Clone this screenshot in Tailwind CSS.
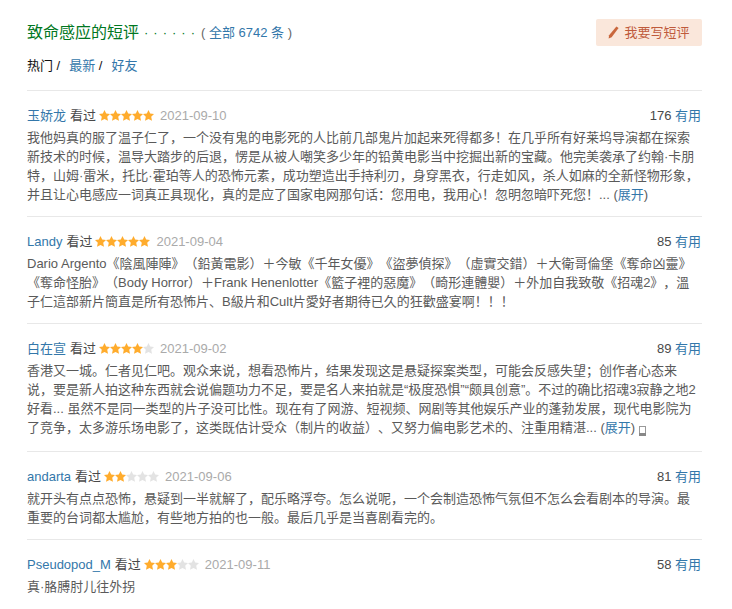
<!DOCTYPE html>
<html lang="zh-CN">
<head>
<meta charset="utf-8">
<script src="https://cdn.jsdelivr.net/npm/@tailwindcss/browser@4"></script>
</head>
<body class="bg-white">
<svg width="0" height="0" class="absolute">
  <defs>
    <path id="s" d="M5.5 0 7.2 3.6 11 4.1 8.2 6.8 9 10.8 5.5 8.9 2 10.8 2.8 6.8 0 4.1 3.8 3.6Z"/>
  </defs>
</svg>
<main class="w-[732px] h-[609px] overflow-hidden pl-[27px] pr-[30px] font-['Liberation_Sans','Noto_Sans_CJK_SC',sans-serif] text-[13px] leading-[19px] text-[#494949] [text-spacing-trim:space-all]">
  <header class="flex justify-between h-[47px] pt-[19px]">
    <h2 class="flex items-center h-[26px] text-[16px] text-[#007722] whitespace-nowrap">致命感应的短评<span class="ml-[5px] tracking-[5px] text-[13px] text-[#007722]">······</span><span class="ml-[1px] text-[13px] text-[#666]">( <a class="text-[#37a]">全部 6742 条</a> )</span></h2>
    <a class="flex items-center justify-center gap-[5px] w-[106px] h-[27px] rounded-[2px] bg-[#fae7db] text-[#bf5a3b]">
      <svg width="11" height="13" viewBox="0 0 11 13"><path d="M8.4.5 10.6 2.1 3.6 11.2.6 12.6 1.1 9.3Z" fill="#c9673d"/></svg>
      <span>我要写短评</span>
    </a>
  </header>
  <nav class="flex h-[43px] pt-[9px] text-[#111] whitespace-nowrap">热门 /<a class="ml-[9px] text-[#37a]">最新</a>&nbsp;/<a class="ml-[9px] text-[#37a]">好友</a></nav>

  <section class="border-t border-[#e8e8e8] h-[126px] pt-[15px] whitespace-nowrap">
    <div class="flex items-center justify-between h-[19px]">
      <div class="flex items-center"><a class="text-[#37a]">玉娇龙</a><span class="ml-[4px]">看过</span>
        <span class="ml-[3px] flex w-[55px] fill-[#ffac2d]"><svg width="11" height="11"><use href="#s"/></svg><svg width="11" height="11"><use href="#s"/></svg><svg width="11" height="11"><use href="#s"/></svg><svg width="11" height="11"><use href="#s"/></svg><svg width="11" height="11"><use href="#s"/></svg></span>
        <span class="ml-[6px] text-[#aaa]">2021-09-10</span></div>
      <div class="mr-[1px]">176 <a class="text-[#37a]">有用</a></div>
    </div>
    <p class="mt-[3px] text-[#5a5a5a]">我他妈真的服了温子仁了，一个没有鬼的电影死的人比前几部鬼片加起来死得都多！在几乎所有好莱坞导演都在探索<br>新技术的时候，温导大踏步的后退，愣是从被人嘲笑多少年的铅黄电影当中挖掘出新的宝藏。他完美袭承了约翰·卡朋<br>特，山姆·雷米，托比·霍珀等人的恐怖元素，成功塑造出手持利刃，身穿黑衣，行走如风，杀人如麻的全新怪物形象，<br>并且让心电感应一词真正具现化，真的是应了国家电网那句话：您用电，我用心！忽明忽暗吓死您！... (<a class="text-[#37a]">展开</a>)</p>
  </section>

  <section class="border-t border-[#e8e8e8] h-[107px] pt-[15px] whitespace-nowrap">
    <div class="flex items-center justify-between h-[19px]">
      <div class="flex items-center"><a class="text-[#37a]">Landy</a><span class="ml-[4px]">看过</span>
        <span class="ml-[3px] flex w-[55px] fill-[#ffac2d]"><svg width="11" height="11"><use href="#s"/></svg><svg width="11" height="11"><use href="#s"/></svg><svg width="11" height="11"><use href="#s"/></svg><svg width="11" height="11"><use href="#s"/></svg><svg width="11" height="11"><use href="#s"/></svg></span>
        <span class="ml-[6px] text-[#aaa]">2021-09-04</span></div>
      <div class="mr-[1px]">85 <a class="text-[#37a]">有用</a></div>
    </div>
    <p class="mt-[3px] text-[#5a5a5a]">Dario Argento《陰風陣陣》（鉛黃電影）＋今敏《千年女優》《盜夢偵探》（虛實交錯）＋大衛哥倫堡《奪命凶靈》<br>《奪命怪胎》（Body Horror）＋Frank Henenlotter《籃子裡的惡魔》（畸形連體嬰）＋外加自我致敬《招魂2》，溫<br>子仁這部新片簡直是所有恐怖片、B級片和Cult片愛好者期待已久的狂歡盛宴啊！！！</p>
  </section>

  <section class="border-t border-[#e8e8e8] h-[128px] pt-[15px] whitespace-nowrap">
    <div class="flex items-center justify-between h-[19px]">
      <div class="flex items-center"><a class="text-[#37a]">白在宣</a><span class="ml-[4px]">看过</span>
        <span class="ml-[3px] flex w-[55px] fill-[#ffac2d]"><svg width="11" height="11"><use href="#s"/></svg><svg width="11" height="11"><use href="#s"/></svg><svg width="11" height="11"><use href="#s"/></svg><svg width="11" height="11"><use href="#s"/></svg><svg width="11" height="11" class="fill-[#e3e3e3]"><use href="#s"/></svg></span>
        <span class="ml-[6px] text-[#aaa]">2021-09-02</span></div>
      <div class="mr-[1px]">89 <a class="text-[#37a]">有用</a></div>
    </div>
    <p class="mt-[3px] text-[#5a5a5a]">香港又一城。仁者见仁吧。观众来说，想看恐怖片，结果发现这是悬疑探案类型，可能会反感失望；创作者心态来<br>说，要是新人拍这种东西就会说偏题功力不足，要是名人来拍就是“极度恐惧”“颇具创意”。不过的确比招魂3寂静之地2<br>好看... 虽然不是同一类型的片子没可比性。现在有了网游、短视频、网剧等其他娱乐产业的蓬勃发展，现代电影院为<br>了竞争，太多游乐场电影了，这类既估计受众（制片的收益）、又努力偏电影艺术的、注重用精湛... (<a class="text-[#37a]">展开</a>)<svg class="inline-block ml-[4px] align-[-4px]" width="7" height="10" viewBox="0 0 7 10"><rect x=".5" y=".5" width="6" height="9" fill="none" stroke="#999"/><rect y="7" width="7" height="3" fill="#888"/></svg></p>
  </section>

  <section class="border-t border-[#e8e8e8] h-[88px] pt-[15px] whitespace-nowrap">
    <div class="flex items-center justify-between h-[19px]">
      <div class="flex items-center"><a class="text-[#37a]">andarta</a><span class="ml-[4px]">看过</span>
        <span class="ml-[3px] flex w-[55px] fill-[#ffac2d]"><svg width="11" height="11"><use href="#s"/></svg><svg width="11" height="11"><use href="#s"/></svg><svg width="11" height="11" class="fill-[#e3e3e3]"><use href="#s"/></svg><svg width="11" height="11" class="fill-[#e3e3e3]"><use href="#s"/></svg><svg width="11" height="11" class="fill-[#e3e3e3]"><use href="#s"/></svg></span>
        <span class="ml-[6px] text-[#aaa]">2021-09-06</span></div>
      <div class="mr-[1px]">81 <a class="text-[#37a]">有用</a></div>
    </div>
    <p class="mt-[3px] text-[#5a5a5a]">就开头有点点恐怖，悬疑到一半就解了，配乐略浮夸。怎么说呢，一个会制造恐怖气氛但不怎么会看剧本的导演。最<br>重要的台词都太尴尬，有些地方拍的也一般。最后几乎是当喜剧看完的。</p>
  </section>

  <section class="border-t border-[#e8e8e8] pt-[15px] whitespace-nowrap">
    <div class="flex items-center justify-between h-[19px]">
      <div class="flex items-center"><a class="text-[#37a]">Pseudopod_M</a><span class="ml-[4px]">看过</span>
        <span class="ml-[3px] flex w-[55px] fill-[#ffac2d]"><svg width="11" height="11"><use href="#s"/></svg><svg width="11" height="11"><use href="#s"/></svg><svg width="11" height="11"><use href="#s"/></svg><svg width="11" height="11" class="fill-[#e3e3e3]"><use href="#s"/></svg><svg width="11" height="11" class="fill-[#e3e3e3]"><use href="#s"/></svg></span>
        <span class="ml-[6px] text-[#aaa]">2021-09-11</span></div>
      <div class="mr-[1px]">58 <a class="text-[#37a]">有用</a></div>
    </div>
    <p class="mt-[3px] text-[#5a5a5a]">真·胳膊肘儿往外拐</p>
  </section>
</main>
</body>
</html>
